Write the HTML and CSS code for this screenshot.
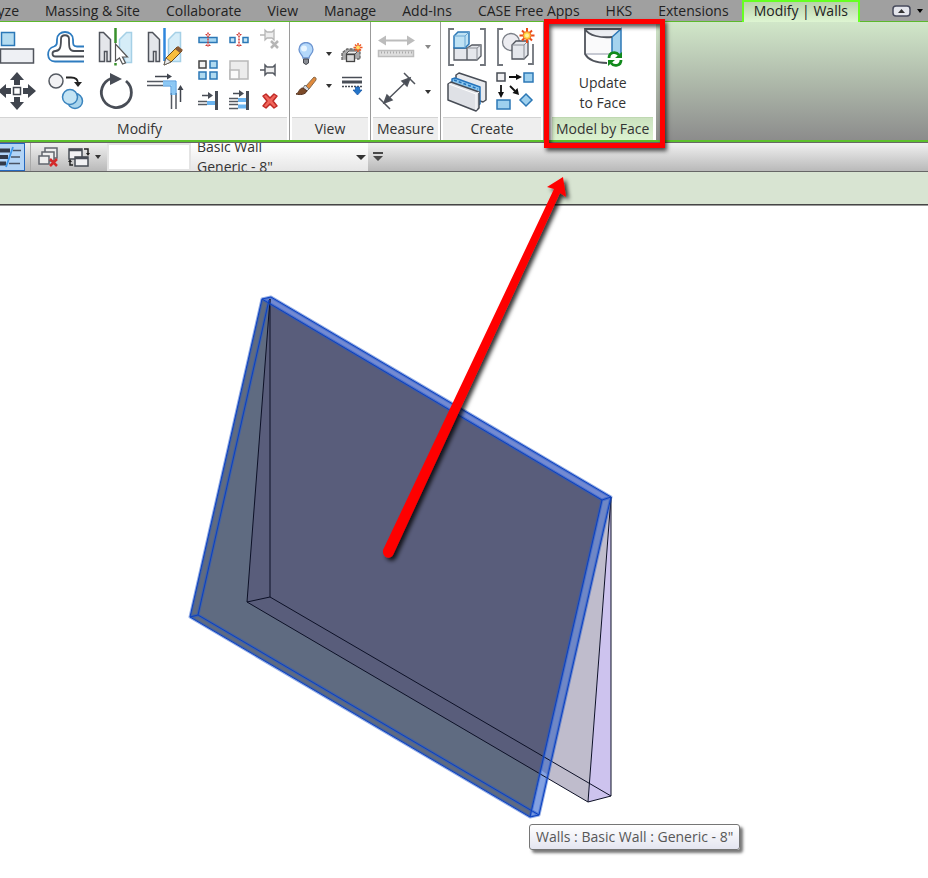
FILE: index.html
```html
<!DOCTYPE html>
<html lang="en">
<head>
  <meta charset="UTF-8">
  <title>Modify | Walls</title>
  <link rel="stylesheet" href="styles.css">
</head>
<body>
  <nav class="tabs">
    <a class="tab tab-cut" href="#">Analyze</a>
    <a class="tab" href="#">Massing &amp; Site</a>
    <a class="tab" href="#">Collaborate</a>
    <a class="tab" href="#">View</a>
    <a class="tab" href="#">Manage</a>
    <a class="tab" href="#">Add-Ins</a>
    <a class="tab" href="#">CASE Free Apps</a>
    <a class="tab" href="#">HKS</a>
    <a class="tab" href="#">Extensions</a>
    <a class="tab active" href="#">Modify | Walls</a>
    <button class="minimize" type="button" aria-label="Minimize ribbon">
      <svg width="34" height="14" viewBox="0 0 34 14">
        <rect x="2" y="2" width="17" height="10" rx="3" fill="#e4e6ec" stroke="#474b5c" stroke-width="1.500"/>
        <path d="M7 9l3.500-4L14 9z" fill="#333"/>
        <path d="M26 5h6l-3 4z" fill="#000"/>
      </svg>
    </button>
  </nav>

  <div class="ribbon">
    <section class="panel modify-panel">
      <div class="panel-body modify-body">
        <div class="big-grid modify-big">
          <button class="tool" type="button" aria-label="Align">
            <svg width="40" height="40" viewBox="0 0 40 40">
              <rect x="4.500" y="5.500" width="13" height="13" fill="#b5dcf0" stroke="#2b78b8" stroke-width="1.500"/>
              <rect x="3.500" y="22" width="33" height="14" fill="#eef0f4" stroke="#50545c" stroke-width="1.500"/>
            </svg>
          </button>
          <button class="tool" type="button" aria-label="Offset">
            <svg width="40" height="40" viewBox="0 0 40 40" fill="none" stroke-width="1.800">
              <path d="M38 34.500H9c-9 0-9-13-1-15 3-1 3-3 3-7 0-10 16-10 16 0 0 5 0 7 4 7h7" stroke="#2e7cc0"/>
              <path d="M38 29.500H9.500c-4 0-4-5.500 0-5.500 5 0 5.500-5 5.500-12 0-5 8-5 8 0 0 8 0 12 5 12h10" stroke="#4a4e55"/>
            </svg>
          </button>
          <button class="tool" type="button" aria-label="Mirror - Pick Axis">
            <svg width="40" height="40" viewBox="0 0 40 40">
              <path d="M4.500 5.500h4l7 7v22h-3.500v-10H9.500v10h-5z" fill="#e4e6ea" stroke="#4f535b" stroke-width="1.500"/>
              <path d="M36.500 5.500h-5l-7 7V30l5 1v4.500h7z" fill="#d6edf8" stroke="#a5d0e6" stroke-width="1.500"/>
              <path d="M20.500 1v15M20.500 36v2.500" stroke="#39912c" stroke-width="2.500"/>
              <path d="M20.500 17v17l4-3 3 6 3-1-3-6h5z" fill="#fff" stroke="#555" stroke-width="1.200"/>
            </svg>
          </button>
          <button class="tool" type="button" aria-label="Mirror - Draw Axis">
            <svg width="40" height="40" viewBox="0 0 40 40">
              <path d="M4.500 5.500h4l7 7v22h-3.500v-10H9.500v10h-5z" fill="#e4e6ea" stroke="#4f535b" stroke-width="1.500"/>
              <path d="M36.500 5.500h-5l-7 7v22h12z" fill="#d6edf8" stroke="#a5d0e6" stroke-width="1.500"/>
              <path d="M20.500 1v33" stroke="#2f86dc" stroke-width="2.500"/>
              <path d="M20 38l2-7L33 20l5 4-11 11z" fill="#f8bd3c" stroke="#6b4a1c"/>
              <path d="M20 38l2-7 5 4z" fill="#eee" stroke="#555" stroke-width=".8"/>
              <path d="M31 22l5 4 3-3-5-4z" fill="#8a5a34"/>
            </svg>
          </button>
          <button class="tool" type="button" aria-label="Move">
            <svg width="40" height="40" viewBox="0 0 40 40" fill="#40454e">
              <path d="M20 0l7 8h-4v5h-6V8h-4zM20 38l7-8h-4v-5h-6v5h-4zM1 19l8-7v4h5v6H9v4zM39 19l-8-7v4h-5v6h5v4z"/>
              <rect x="16.500" y="15.500" width="7" height="7" fill="#fff" stroke="#40454e" stroke-width="1.500"/>
            </svg>
          </button>
          <button class="tool" type="button" aria-label="Copy">
            <svg width="40" height="40" viewBox="0 0 40 40">
              <circle cx="10" cy="9" r="7" fill="#f2f2f4" stroke="#555a62" stroke-width="1.500"/>
              <path d="M20 5.500h5c5 0 7 2 7 6" fill="none" stroke="#222" stroke-width="1.800"/>
              <path d="M28 10h8l-4 5z" fill="#222"/>
              <circle cx="29" cy="29" r="7.500" fill="#a8d4ec" stroke="#3a84be" stroke-width="1.500"/>
              <circle cx="24" cy="25" r="7.500" fill="#c4e4f4" stroke="#3a84be" stroke-width="1.500"/>
            </svg>
          </button>
          <button class="tool" type="button" aria-label="Rotate">
            <svg width="40" height="40" viewBox="0 0 40 40">
              <path d="M31 9a15 15 0 1 1-15-2.500" fill="none" stroke="#484d56" stroke-width="2.800"/>
              <path d="M15 1l12 6-12 6z" fill="#484d56"/>
            </svg>
          </button>
          <button class="tool" type="button" aria-label="Trim/Extend to Corner">
            <svg width="40" height="40" viewBox="0 0 40 40" fill="none">
              <path d="M11 4.500h14M36.500 30V17" stroke="#40454e" stroke-width="1.500"/>
              <path d="M23 1.500l5 3-5 3zM33.500 18l3-5 3 5z" fill="#40454e"/>
              <path d="M3 9.500h16M3 13.500h16M27.500 21v16M32 21v16" stroke="#555a62" stroke-width="1.500"/>
              <path d="M19 11.500h10.500V23" stroke="#8cc8f4" stroke-width="4"/>
              <path d="M19 9h13v14M19 14h8v9" stroke="#3b8fdc"/>
            </svg>
          </button>
        </div>
        <div class="small-grid">
          <button class="tool" type="button" aria-label="Split Element">
            <svg width="24" height="24" viewBox="0 0 24 24">
              <rect x="3" y="9.500" width="18" height="5" fill="#a6d6f2" stroke="#2c78b6" stroke-width="1.500"/>
              <path d="M12 4.500v15" stroke="#d23a34" stroke-width="1.500" stroke-dasharray="2 1"/>
              <path d="M9 6h2v2zM15 6h-2v2zM9 18h2v-2zM15 18h-2v-2z" fill="#d23a34"/>
            </svg>
          </button>
          <button class="tool" type="button" aria-label="Split with Gap">
            <svg width="24" height="24" viewBox="0 0 24 24">
              <rect x="3" y="9.500" width="5" height="5" fill="#c6e6f6" stroke="#2c78b6" stroke-width="1.500"/>
              <rect x="16" y="9.500" width="5" height="5" fill="#c6e6f6" stroke="#2c78b6" stroke-width="1.500"/>
              <path d="M12 4.500v15" stroke="#d23a34" stroke-width="1.500" stroke-dasharray="2 1"/>
              <path d="M9 6h2v2zM15 6h-2v2zM9 18h2v-2zM15 18h-2v-2z" fill="#d23a34"/>
            </svg>
          </button>
          <button class="tool" type="button" aria-label="Unpin" disabled>
            <svg width="24" height="24" viewBox="0 0 24 24" fill="#eee" stroke="#b6b6b6" stroke-width="1.300">
              <path d="M2 7h5M7 2v10l2-2h5l2 2V2l-2 2H9z"/>
              <path d="M13 13l7 7M20 13l-7 7" stroke-width="2.500"/>
            </svg>
          </button>
          <button class="tool" type="button" aria-label="Array">
            <svg width="24" height="24" viewBox="0 0 24 24" fill="#b0daf0" stroke="#2c78b6" stroke-width="1.500">
              <rect x="3" y="3" width="7" height="7" fill="#f2f2f2" stroke="#444"/>
              <rect x="14" y="3" width="7" height="7"/>
              <rect x="3" y="14" width="7" height="7"/>
              <rect x="14" y="14" width="7" height="7"/>
            </svg>
          </button>
          <button class="tool" type="button" aria-label="Scale" disabled>
            <svg width="24" height="24" viewBox="0 0 24 24" fill="#ececec" stroke="#b9b9b9" stroke-width="1.500">
              <rect x="3" y="3" width="18" height="18"/>
              <rect x="3" y="12" width="9" height="9" fill="#fafafa"/>
            </svg>
          </button>
          <button class="tool" type="button" aria-label="Pin">
            <svg width="24" height="24" viewBox="0 0 24 24" fill="#eee" stroke="#555a62" stroke-width="1.500">
              <path d="M2 12h5M7 7v10l2-2h6l2 2V7l-2 2H9z"/>
            </svg>
          </button>
          <button class="tool" type="button" aria-label="Trim/Extend Single Element">
            <svg width="24" height="24" viewBox="0 0 24 24" fill="none">
              <path d="M20.500 3v19" stroke="#484d56" stroke-width="3"/>
              <path d="M6 7.500h8" stroke="#484d56" stroke-width="1.500"/>
              <path d="M12 4l5 3.500-5 3.500z" fill="#484d56"/>
              <path d="M2 13.500h9M2 16.500h9" stroke="#555a62" stroke-width="1.500"/>
              <path d="M11 15h8" stroke="#6ab4f0" stroke-width="4"/>
            </svg>
          </button>
          <button class="tool" type="button" aria-label="Trim/Extend Multiple Elements">
            <svg width="24" height="24" viewBox="0 0 24 24" fill="none">
              <path d="M20.500 3v19" stroke="#484d56" stroke-width="3"/>
              <path d="M6 5.500h8" stroke="#484d56" stroke-width="1.500"/>
              <path d="M12 2l5 3.500L12 9z" fill="#484d56"/>
              <path d="M2 10.500h9M2 13.500h9M2 16.500h9M2 20.500h9" stroke="#555a62" stroke-width="1.500"/>
              <path d="M11 12h8M11 18.500h8" stroke="#6ab4f0" stroke-width="4"/>
            </svg>
          </button>
          <button class="tool" type="button" aria-label="Delete">
            <svg width="24" height="24" viewBox="0 0 24 24">
              <path d="M5 8l3-2 4 4 4-4 3 2-4 5 4 5-3 2-4-4-4 4-3-2 4-5z" fill="#f0665c" stroke="#c02a26" stroke-width="1.500" stroke-linejoin="round"/>
            </svg>
          </button>
        </div>
      </div>
      <h2 class="panel-title">Modify</h2>
    </section>

    <section class="panel">
      <div class="panel-body view-body">
        <button class="tool" type="button" aria-label="Hide in View">
          <svg width="24" height="24" viewBox="0 0 24 24">
            <path d="M9 16c0-3-4-4-4-8.500a7 7 0 0 1 14 0C19 12 15 13 15 16z" fill="#b4d8fa" stroke="#6c94d0" stroke-width="1.300"/>
            <circle cx="10" cy="6.500" r="3" fill="#e8f5ff"/>
            <path d="M9.500 17h5v4l-2.500 1.500L9.500 21z" fill="#8a8d94" stroke="#44474e"/>
          </svg>
        </button>
        <button class="tool caret" type="button" aria-label="Hide options"></button>
        <button class="tool" type="button" aria-label="Displace Elements">
          <svg width="24" height="24" viewBox="0 0 24 24">
            <path d="M2 18V11l5-4h6l7 1v9h-3" fill="#aaa" stroke="#666" stroke-width="1.300" stroke-dasharray="3 1"/>
            <path d="M6 12l3-3h9l-3 3z" fill="#eee" stroke="#555"/>
            <rect x="6.500" y="12.500" width="8" height="7" fill="#d9d9d9" stroke="#444" stroke-width="1.300"/>
            <path d="M18 1v9M13.500 5.500h9M15 2.500l6 6M21 2.500l-6 6" stroke="#ef5a24" stroke-width="1.500"/>
            <circle cx="18" cy="5.500" r="2" fill="#ffe06a"/>
          </svg>
        </button>
        <button class="tool" type="button" aria-label="Override Graphics">
          <svg width="24" height="24" viewBox="0 0 24 24">
            <path d="M12 12l8-9 2 1v2l-7 9z" fill="#e08a3c" stroke="#8b6a4a"/>
            <path d="M11 11l4 4-2 2-4-3z" fill="#d7dae0" stroke="#777"/>
            <path d="M2 20c3-1 3-6 7-6l4 3c-2 4-7 4-11 3z" fill="#7c4a28" stroke="#55331f"/>
          </svg>
        </button>
        <button class="tool caret" type="button" aria-label="Override options"></button>
        <button class="tool" type="button" aria-label="Linework">
          <svg width="24" height="24" viewBox="0 0 24 24" fill="none" stroke="#484d56">
            <path d="M2 3.500h20" stroke-width="1.500"/>
            <path d="M2 8h20" stroke-width="3"/>
            <path d="M2 12.500h20" stroke-width="1.500" stroke-dasharray="2 1"/>
            <path d="M13 16h2.500v-3h4v3H22l-4.500 5z" fill="#2474c8" stroke="#1c5ca8" stroke-width=".8"/>
          </svg>
        </button>
      </div>
      <h2 class="panel-title">View</h2>
    </section>

    <section class="panel">
      <div class="panel-body measure-body">
        <button class="tool" type="button" aria-label="Measure Between Two References" disabled>
          <svg width="40" height="40" viewBox="0 0 40 40">
            <path d="M6 13.500h28" stroke="#bcbcbc" stroke-width="2"/>
            <path d="M1 13.500l8-5v10zM38 13.500l-8-5v10z" fill="#bcbcbc"/>
            <rect x="1.500" y="23.500" width="35" height="6" fill="#dedede" stroke="#bdbdbd" stroke-width="1.500"/>
            <path d="M4 25.500h32" stroke="#aaa" stroke-width="2" stroke-dasharray="1 2"/>
          </svg>
        </button>
        <button class="tool caret faded" type="button" aria-label="Measure options"></button>
        <button class="tool" type="button" aria-label="Aligned Dimension">
          <svg width="40" height="40" viewBox="0 0 40 40" stroke="#50545c" stroke-width="1.500">
            <path d="M8 30L32 7M2 26l11 11M27 1l11 11"/>
            <path d="M7 31l3-8 5 5zM33 6l-8 3 5 5z" fill="#484d56"/>
          </svg>
        </button>
        <button class="tool caret" type="button" aria-label="Dimension options"></button>
      </div>
      <h2 class="panel-title">Measure</h2>
    </section>

    <section class="panel">
      <div class="panel-body create-body">
        <div class="big-grid create-grid">
          <button class="tool" type="button" aria-label="Create Group">
            <svg width="40" height="40" viewBox="0 0 40 40">
              <path d="M7 2H2v36h5M33 2h5v36h-5" fill="none" stroke="#71757c" stroke-width="1.800"/>
              <path d="M7 21h13v12H7zM20 21l5-3h9v11l-4 4H20z" fill="#e5e7ec" stroke="#555a62" stroke-width="1.300"/>
              <path d="M20 21h10v12M30 21l4-3" fill="none" stroke="#8a8e96"/>
              <path d="M7 9l4-4h11v12l-4 4H7z" fill="#bfe2f4" stroke="#2c78b6" stroke-width="1.500"/>
              <path d="M7 9h11v12M18 9l4-4" fill="none" stroke="#6aa8d4"/>
            </svg>
          </button>
          <button class="tool" type="button" aria-label="Create Similar">
            <svg width="40" height="40" viewBox="0 0 40 40">
              <path d="M7 2H2v36h5M32 37h5V17" fill="none" stroke="#71757c" stroke-width="1.800"/>
              <circle cx="15" cy="15" r="8.500" fill="#ececf0" stroke="#7b7f87" stroke-width="1.300"/>
              <path d="M16 18l4-4h12v14l-4 4H16z" fill="#e5e7ec" stroke="#50545c" stroke-width="1.300"/>
              <path d="M16 18h12v14M28 18l4-4" fill="none" stroke="#8a8e96"/>
              <path d="M31 1v15M23.500 8.500h15M26 3.500l10 10M36 3.500l-10 10" stroke="#ea4a18" stroke-width="2"/>
              <circle cx="31" cy="8.500" r="4" fill="#ffcf3e" stroke="#f0722a"/>
              <circle cx="31" cy="8.500" r="2" fill="#fff2a0"/>
            </svg>
          </button>
          <button class="tool" type="button" aria-label="Create Assembly">
            <svg width="40" height="40" viewBox="0 0 40 40" stroke-width="1.500" stroke-linejoin="round">
              <path d="M9 3l3-2 27 9v18l-3 2-27-9z" fill="#e8eaee" stroke="#484d56"/>
              <path d="M5 7l3-1 25 9v17l-3 2-25-9z" fill="#8cc8f0" stroke="#2474bc"/>
              <path d="M7 8l24 9" stroke="#2474bc" stroke-dasharray="3 2"/>
              <path d="M1 12l3-2 28 10v16l-3 3L1 28z" fill="#dfe1e6" stroke="#484d56"/>
              <path d="M2 12l27 10v16M29 22l3-2" fill="none" stroke="#fff" stroke-width="1"/>
            </svg>
          </button>
          <button class="tool" type="button" aria-label="Create Parts">
            <svg width="40" height="40" viewBox="0 0 40 40">
              <rect x="1" y="1" width="8" height="8" fill="#f0f0f2" stroke="#484d56" stroke-width="1.500"/>
              <rect x="28" y="1" width="9" height="9" fill="#9ed0ee" stroke="#2c78b6" stroke-width="1.500"/>
              <rect x="1" y="28" width="13" height="9" fill="#9ed0ee" stroke="#2c78b6" stroke-width="1.500"/>
              <path d="M30 22l6 6-6 6-6-6z" fill="#9ed0ee" stroke="#2c78b6" stroke-width="1.500"/>
              <path d="M13 5h8M5 13v8M14 14l5 5" stroke="#111" stroke-width="1.800"/>
              <path d="M20 2l6 3-6 3zM2 20l3 6 3-6zM23 23l-1.500-7-5 5z" fill="#111"/>
            </svg>
          </button>
        </div>
      </div>
      <h2 class="panel-title">Create</h2>
    </section>

    <section class="panel face-panel">
      <button class="panel-body face-body" type="button">
        <svg width="40" height="40" viewBox="0 0 40 40">
          <path d="M2 2h36L29 10C18 11 8 9 2 2z" fill="#eceef2"/>
          <path d="M2 2c4 7 16 9 27 8v18C22 27 8 28 2 27z" fill="#fafafb"/>
          <path d="M29 10l9-8v25l-9 2z" fill="#a5d3ee" stroke="#2c78b6" stroke-width="1.500"/>
          <path d="M2 27h27" stroke="#b4b8c4" stroke-width="1.500"/>
          <path d="M38 2H2v25c4 7 13 9 22 9M2 2c4 7 16 9 27 8" fill="none" stroke="#50545c" stroke-width="1.800"/>
          <circle cx="32" cy="32" r="7" fill="#fff"/>
          <path d="M26 31c0-6 7-7 10-3M38 33c0 6-7 7-10 3" fill="none" stroke="#118a1c" stroke-width="2.800"/>
          <path d="M39 25v6h-7zM25 39v-6h7z" fill="#118a1c"/>
        </svg>
        <span>Update<br>to Face</span>
      </button>
      <h2 class="panel-title">Model by Face</h2>
      <div class="highlight"></div>
    </section>
  </div>

  <div class="options">
    <button class="tool thin-lines" type="button" aria-label="Thin Lines">
      <svg width="24" height="26" viewBox="0 0 24 26">
        <path d="M0 6.500h10M0 13h8M0 19.500h6" stroke="#333a48" stroke-width="4"/>
        <path d="M13 6.500h8M11 13h9M9 19.500h11" stroke="#4a5364" stroke-width="1.500"/>
        <path d="M13 3L6 23" stroke="#3c96e8" stroke-width="1.800"/>
      </svg>
    </button>
    <div class="option-tools">
      <button class="tool" type="button" aria-label="Close Hidden Windows">
        <svg width="24" height="24" viewBox="0 0 24 24" fill="#eee" stroke="#62666e" stroke-width="1.500">
          <path d="M8 3h12v10H8z"/>
          <path d="M5 7h12v9H5z"/>
          <path d="M2 11h10v8H2z"/>
          <path d="M13 14l7 7M20 14l-7 7" stroke="#d42a2a" stroke-width="2.500"/>
        </svg>
      </button>
      <button class="tool" type="button" aria-label="Switch Windows">
        <svg width="24" height="24" viewBox="0 0 24 24" fill="#f2f2f4" stroke="#484d56" stroke-width="1.500">
          <path d="M2 4h13v10H2z"/>
          <path d="M8 12h13v9H8z"/>
          <path d="M2 5h13M8 13h13" stroke-width="2.500"/>
          <path d="M17 4h4v5M6 20H3v-4" fill="none" stroke="#222"/>
          <path d="M19 8h4l-2 3zM1 17h4l-2-3z" fill="#222" stroke="none"/>
        </svg>
      </button>
      <button class="tool caret" type="button" aria-label="Window list"></button>
    </div>
    <div class="preview"></div>
    <button class="type-selector" type="button">
      <span>Basic Wall<br>Generic - 8"</span>
      <svg width="10" height="5" viewBox="0 0 10 5"><path d="M0 0h10L5 5z" fill="#333"/></svg>
    </button>
    <button class="tool overflow" type="button" aria-label="More">
      <svg width="12" height="10" viewBox="0 0 12 10"><path d="M1 0h10v2H1zM1 4h10L6 9z" fill="#484848"/></svg>
    </button>
  </div>

  <div class="context-bar"></div>

  <main class="canvas">
    <!-- viewBox starts where the canvas starts below the bars -->
    <svg class="scene" width="928" height="672" viewBox="0 206 928 672">
      <defs>
        <clipPath id="front"><path d="M262 299l340 201-72 317-340-200z"/></clipPath>
        <filter id="shadow" filterUnits="userSpaceOnUse" x="360" y="160" width="240" height="420">
          <feDropShadow dx="3" dy="3" stdDeviation="2" flood-color="#000" flood-opacity=".8"/>
        </filter>
      </defs>

      <!-- vertical wall -->
      <path d="M270 299l341 198-23 305-341-200z" fill="#bfbccc"/>
      <path d="M611 497v299l-23 6z" fill="#cdc3ee"/>

      <!-- slanted wall -->
      <path d="M262 299l9-2 340 200-9 3z" fill="#738ad2"/>
      <path d="M602 500l9-3-72 318-9 2z" fill="#6f87c6"/>
      <path d="M541 770l7 5-9 40-9 2z" fill="#83a1e2"/>
      <path d="M262 299l340 201-72 317-340-200z" fill="#5f6b81"/>
      <path d="M270 299l341 198-23 305-341-200z" fill="#595d7b" clip-path="url(#front)"/>

      <g class="edge">
        <path d="M270 299v298l341 199M270 299l-23 303 341 200M247 602l23-5M588 802l23-6"/>
        <path d="M611 497l-23 305M611 497v299"/>
      </g>
      <path class="selected-halo" d="M262 299l9-2 340 200-72 318-9 2-340-200zM262 299l340 201-72 317M602 500l9-3M269 300l-71 315 341 200M190 617l8-2"/>
      <path class="selected" d="M262 299l9-2 340 200-72 318-9 2-340-200zM262 299l340 201-72 317M602 500l9-3M269 300l-71 315 341 200M190 617l8-2"/>

      <path d="M563 177L547 187 554 189 383 550C382 558 390 560 393 555L560 193 566 197Z" fill="#f00" filter="url(#shadow)"/>
    </svg>
    <div class="tooltip" role="tooltip">Walls : Basic Wall : Generic - 8"</div>
  </main>
</body>
</html>
```
FILE: styles.css
```css
* {
  box-sizing: border-box;
}
body {
  margin: 0;
  min-height: 100vh;
  display: flex;
  flex-direction: column;
  background: #fff;
  font-family: "Open Sans", "Noto Sans", sans-serif;
  font-size: 14px;
  line-height: 20px;
  color: #333;
  overflow: hidden;
}
button {
  font: inherit;
  color: inherit;
  border: none;
  background: none;
  padding: 0;
}
svg {
  display: block;
  flex: none;
}

/* tabs */
.tabs {
  display: flex;
  height: 22px;
  background: #a0a0a0;
  border-bottom: 1px solid #5cb82c;
  line-height: 22px;
}
.tab {
  padding: 0 13px;
  color: #222;
  text-decoration: none;
  white-space: nowrap;
}
.tab-cut {
  width: 32px;
  display: flex;
  justify-content: flex-end;
}
.tab.active {
  height: 22px;
  padding: 0 10px;
  line-height: 18px;
  border: 2px solid #66ff22;
  border-bottom: none;
  background: linear-gradient(#b9d2ab, #def5d2);
}
.minimize {
  margin-left: auto;
  padding-right: 3px;
}

/* ribbon */
.ribbon {
  display: flex;
  height: 120px;
  background: linear-gradient(#d1e7c9, #8c8c8c);
  border-bottom: 2px solid #5cc02c;
}
.panel {
  display: flex;
  flex-direction: column;
  background: #fff;
  border-right: 1px solid #9a9a9a;
}
.panel-body {
  height: 96px;
}
.panel-title {
  flex: 1;
  margin: 0 2px;
  border-top: 1px solid #d4d4d4;
  background: #eee;
  font-size: 14px;
  font-weight: normal;
  line-height: 22px;
  text-align: center;
  white-space: nowrap;
}
.modify-panel .panel-title {
  margin-left: -8px;
}
.tool {
  display: flex;
  align-items: center;
  justify-content: center;
}
.caret {
  width: 18px;
}
.caret::after {
  content: "";
  border: 3px solid transparent;
  border-top: 4px solid #333;
  border-bottom: none;
}
.caret.faded::after {
  border-top-color: #888;
}
.modify-body {
  display: flex;
  gap: 12px;
  padding-right: 7px;
}
.big-grid {
  display: grid;
  grid-template-columns: repeat(2, 40px);
  grid-auto-rows: 40px;
  gap: 5px 9px;
  padding-top: 5px;
}
.modify-big {
  grid-template-columns: repeat(4, 40px);
  margin-left: -3px;
}
.small-grid {
  display: grid;
  grid-template-columns: repeat(3, 24px);
  grid-auto-rows: 24px;
  gap: 6px 7px;
  padding-top: 6px;
}
.view-body {
  display: grid;
  grid-template-columns: 24px 18px 24px;
  grid-auto-rows: 24px;
  gap: 8px 2px;
  padding: 20px 6px 0 4px;
}
.measure-body {
  display: grid;
  grid-template-columns: 40px 18px;
  grid-auto-rows: 40px;
  gap: 5px 2px;
  padding: 5px 3px 0 6px;
}
.create-body {
  padding: 0 7px 0 6px;
}
.face-panel {
  position: relative;
  padding: 0 3px 0 8px;
  border-right: none;
}
.face-body {
  display: flex;
  flex-direction: column;
  align-items: center;
  gap: 6px;
  padding-top: 5px;
}
.face-panel .panel-title {
  margin: 0;
  padding: 0 4px;
  border-top-color: #bfd8b2;
  background: linear-gradient(#cbe2bf, #dcf2d0);
}
.highlight {
  position: absolute;
  inset: -3px -9px -8px 0;
  z-index: 2;
  border: 5px solid #f00;
  box-shadow: 2px 3px 4px #000a, inset 2px 3px 4px #000a;
}

/* options bar */
.options {
  display: flex;
  height: 30px;
  border-top: 1px solid #666;
  border-bottom: 1px solid #666;
  background: linear-gradient(#f0f0f0, #b9b9b9);
}
.thin-lines {
  border: 1px solid #2468c0;
  border-left: none;
  background: #b3d4f6;
}
.option-tools {
  display: flex;
  gap: 6px;
  margin-left: 5px;
  padding-left: 6px;
  border-left: 1px solid #aaa;
}
.option-tools .caret {
  margin-left: -8px;
}
.preview {
  width: 84px;
  background: #fff;
  border: 2px solid #e4e4e4;
}
.type-selector {
  display: flex;
  align-items: center;
  justify-content: space-between;
  width: 177px;
  padding: 0 2px 0 6px;
  overflow: hidden;
  background: linear-gradient(#fff, #e6e6e6);
  text-align: left;
}
.overflow {
  width: 20px;
}
.context-bar {
  height: 34px;
  background: #d8e4d2;
  border-bottom: 2px groove #999;
}

/* model view */
.canvas {
  position: relative;
  flex: 1;
}
.scene {
  position: absolute;
  top: 0;
  left: 0;
  overflow: visible;
}
.edge {
  fill: none;
  stroke: #0c1026;
  stroke-width: 1;
}
.selected-halo {
  fill: none;
  stroke: #2458cc;
  stroke-width: 3;
  stroke-opacity: .5;
  stroke-linejoin: round;
}
.selected {
  fill: none;
  stroke: #0a40c0;
  stroke-width: 1;
}
.tooltip {
  position: absolute;
  left: 529px;
  top: 618px;
  padding: 2px 6px;
  border: 1px solid #767676;
  border-radius: 3px;
  background: linear-gradient(#fff, #e4e5f0);
  box-shadow: 3px 3px 3px #0008;
  color: #575757;
  white-space: nowrap;
}
```
